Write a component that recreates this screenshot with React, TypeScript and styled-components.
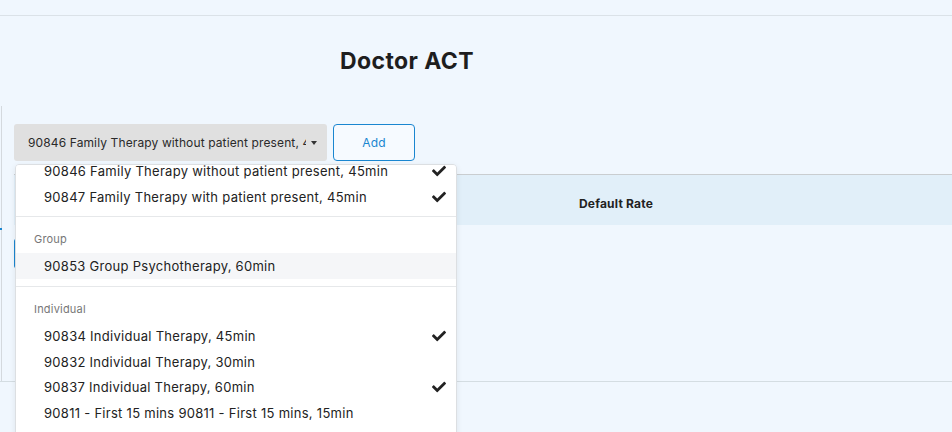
import React, { useLayoutEffect, useRef } from "react";
import styled, { createGlobalStyle } from "styled-components";
import { FaCheck } from "react-icons/fa";

const GlobalStyle = createGlobalStyle`
  html, body {
    margin: 0;
    padding: 0;
    background: #f0f7fe;
    font-family: Inter, "Open Sans", "Liberation Sans", sans-serif;
    color: #222;
    overflow: hidden;
  }
`

const Page = styled.div`
  position: relative;
  width: 952px;
  height: 432px;
  overflow: hidden;
`

const TopBar = styled.div`
  height: 15px;
  border-bottom: 1px solid #dbe2e8;
`

const Header = styled.div`
  height: 90px;
  display: flex;
  align-items: center;
  padding-left: 340px;
`

const Title = styled.h1`
  margin: 0;
  font-size: 23px;
  font-weight: 700;
  letter-spacing: 0.4px;
  color: #1e1e1e;
`

const Panel = styled.div`
  position: relative;
  margin-left: 1px;
  border-left: 1px solid #d4d9de;
  height: 257px;
  padding: 18px 0 0 12px;
  &::before {
    content: "";
    position: absolute;
    left: -2px;
    top: 122px;
    width: 2px;
    height: 2px;
    background: #1a86d0;
  }
`

const Toolbar = styled.div`
  display: flex;
  gap: 6px;
  align-items: stretch;
`

const Select = styled.div`
  width: 313px;
  height: 37px;
  box-sizing: border-box;
  background: #e0e0e0;
  border-radius: 3px;
  display: flex;
  align-items: center;
  padding: 0 10px 0 14px;
  font-size: 12px;
  letter-spacing: 0.12px;
  color: #2a2a2a;
  gap: 5px;
`

const SelectText = styled.span`
  flex: 1;
  white-space: nowrap;
  overflow: hidden;
`

const Caret = styled.span`
  flex: none;
  width: 0;
  height: 0;
  border-left: 3.5px solid transparent;
  border-right: 3.5px solid transparent;
  border-top: 4px solid #333;
`

const AddButton = styled.button`
  width: 82px;
  height: 37px;
  box-sizing: border-box;
  border: 1px solid #1a86d0;
  border-radius: 4px;
  background: #f6faff;
  color: #1a86d0;
  font-family: inherit;
  font-size: 12px;
  letter-spacing: 0.2px;
`

const Table = styled.div`
  margin-top: 13px;
  border-top: 1px solid #c9cdd0;
`

const HeadRow = styled.div`
  display: grid;
  grid-template-columns: 551px 1fr;
  height: 50px;
  align-items: center;
  background: #e1eff9;
  font-size: 12px;
  font-weight: 700;
  letter-spacing: 0.2px;
  color: #222;
`

const HeadCell = styled.div`
  padding: 6px 0 0 14px;
`

const Body = styled.div`
  padding-top: 14px;
`

const BlueTab = styled.div`
  width: 4px;
  height: 29px;
  border-radius: 2px;
  background: #1a86d0;
`

const Footer = styled.div`
  border-top: 1px solid #d4dde2;
`

const Menu = styled.div`
  position: absolute;
  left: 15px;
  top: 164px;
  width: 442px;
  height: 320px;
  box-sizing: border-box;
  background: #fff;
  border: 1px solid #dcdfe2;
  border-radius: 4px;
  box-shadow: 0 2px 6px rgba(0, 0, 0, 0.08);
  overflow-y: auto;
  scrollbar-width: none;
  &::-webkit-scrollbar { display: none; }
`

const Group = styled.div<{ $last?: boolean }>`
  padding: 7px 0;
  border-bottom: ${p => (p.$last ? "none" : "1px solid #e6e8ea")};
`

const GroupLabel = styled.div`
  padding: 8px 0 7px 18px;
  line-height: 14px;
  font-size: 11px;
  letter-spacing: 0.2px;
  color: #777;
`

const Item = styled.div<{ $active?: boolean }>`
  display: flex;
  align-items: center;
  height: 25.7px;
  padding: 0 10px 0 28px;
  font-size: 13px;
  letter-spacing: 0.28px;
  color: #222;
  background: ${p => (p.$active ? "#f5f6f8" : "transparent")};
`

const ItemText = styled.span`
  flex: 1;
`

const Check = styled(FaCheck)`
  width: 14px;
  height: 14px;
  color: #222;
`

type Opt = { label: string; checked?: boolean; active?: boolean }

const groups: { name: string; items: Opt[] }[] = [
  {
    name: "Family",
    items: [
      { label: "90846 Family Therapy without patient present, 45min", checked: true },
      { label: "90847 Family Therapy with patient present, 45min", checked: true },
    ],
  },
  {
    name: "Group",
    items: [{ label: "90853 Group Psychotherapy, 60min", active: true }],
  },
  {
    name: "Individual",
    items: [
      { label: "90834 Individual Therapy, 45min", checked: true },
      { label: "90832 Individual Therapy, 30min" },
      { label: "90837 Individual Therapy, 60min", checked: true },
      { label: "90811 - First 15 mins 90811 - First 15 mins, 15min" },
      { label: "90839 Psychotherapy for crisis, 60min" },
      { label: "90840 Psychotherapy for crisis, each additional 30min" },
    ],
  },
]

export default function App() {
  const menuRef = useRef<HTMLDivElement>(null)

  useLayoutEffect(() => {
    if (menuRef.current) menuRef.current.scrollTop = 43
  }, [])

  return (
    <Page>
      <GlobalStyle />
      <TopBar />
      <Header>
        <Title>Doctor ACT</Title>
      </Header>
      <Panel>
        <Toolbar>
          <Select>
            <SelectText>90846 Family Therapy without patient present, 45min</SelectText>
            <Caret />
          </Select>
          <AddButton>Add</AddButton>
        </Toolbar>
        <Table>
          <HeadRow>
            <HeadCell>Service</HeadCell>
            <HeadCell>Default Rate</HeadCell>
          </HeadRow>
          <Body>
            <BlueTab />
          </Body>
        </Table>
      </Panel>
      <Footer />
      <Menu ref={menuRef}>
        {groups.map((g, gi) => (
          <Group key={g.name} $last={gi === groups.length - 1}>
            <GroupLabel>{g.name}</GroupLabel>
            {g.items.map(it => (
              <Item key={it.label} $active={it.active}>
                <ItemText>{it.label}</ItemText>
                {it.checked && <Check />}
              </Item>
            ))}
          </Group>
        ))}
      </Menu>
    </Page>
  )
}
